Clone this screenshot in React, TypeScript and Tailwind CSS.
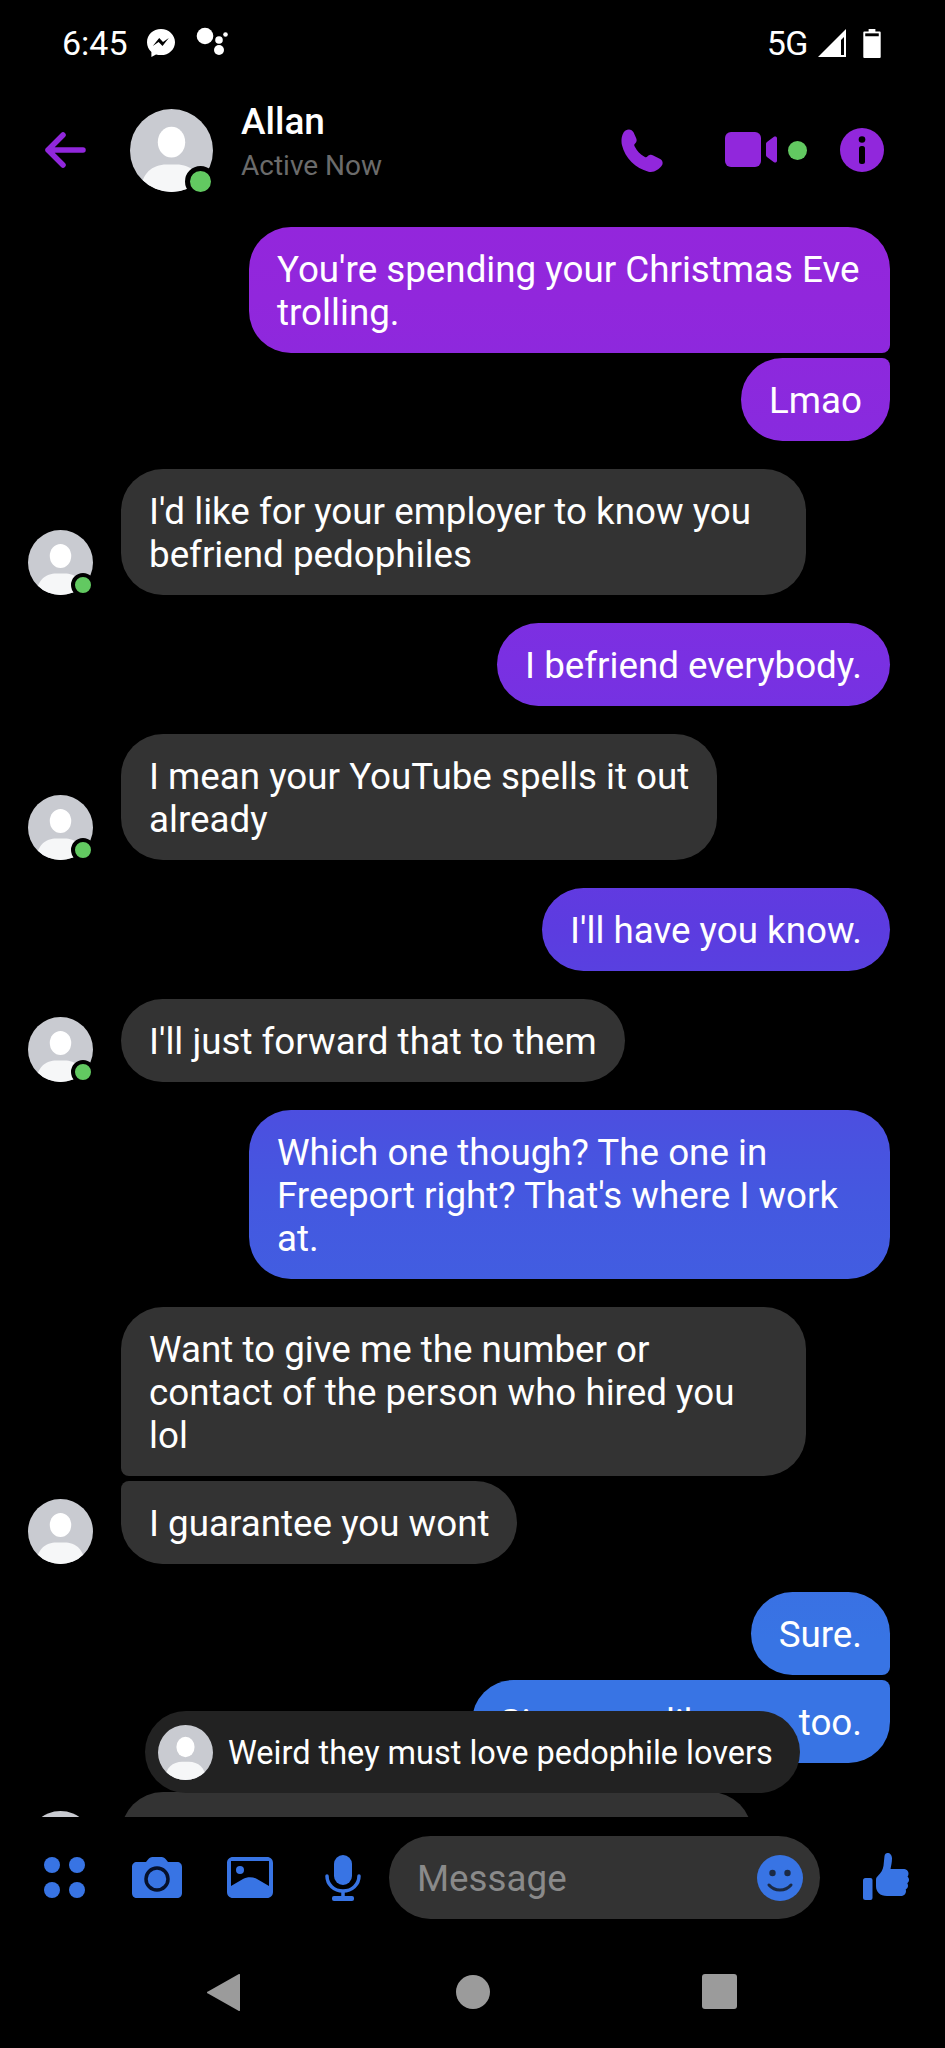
import React from "react";

const Avatar = ({ size }: { size: string }) => (
  <div className={`relative shrink-0 ${size}`}>
    <svg viewBox="0 0 100 100" className="w-full h-full block">
      <defs>
        <clipPath id="av"><circle cx="50" cy="50" r="50" /></clipPath>
      </defs>
      <circle cx="50" cy="50" r="50" fill="#c9cbd1" />
      <g clipPath="url(#av)">
        <ellipse cx="50" cy="40" rx="16.5" ry="18.5" fill="#fff" />
        <path d="M13 100C13 78 27 67 44 67h12c17 0 31 11 31 33Z" fill="#f6f7f8" />
      </g>
    </svg>
  </div>
);

const Online = ({ big }: { big?: boolean }) => (
  <div
    className={
      big
        ? "absolute right-[-3px] bottom-[-5px] w-[31px] h-[31px] rounded-full bg-[#62c961] border-[5px] border-black"
        : "absolute right-[-2px] bottom-[-2px] w-[24px] h-[24px] rounded-full bg-[#62c961] border-[4px] border-black"
    }
  />
);

const SmallAvatar = ({ online }: { online?: boolean }) => (
  <div className="relative shrink-0 w-[65px] h-[65px]">
    <Avatar size="w-[65px] h-[65px]" />
    {online && <Online />}
  </div>
);

const Text = ({ lines }: { lines: string[] }) => (
  <>
    {lines.map((l, i) => (
      <div key={i} className="whitespace-nowrap">
        {l}
      </div>
    ))}
  </>
);

const Mine = ({ lines, cls }: { lines: string[]; cls: string }) => (
  <div className="flex justify-end">
    <div
      className={`bg-fixed bg-[linear-gradient(180deg,#9a24dc_0px,#9127dc_300px,#7a30e2_660px,#5c3ce0_930px,#4458e0_1200px,#3874e4_1640px)] text-white px-[28px] pt-[21px] pb-[19px] text-[36.75px] leading-[43px] ${cls}`}
    >
      <Text lines={lines} />
    </div>
  </div>
);

const Theirs = ({ lines, cls, avatar, online }: { lines?: string[]; cls: string; avatar?: boolean; online?: boolean }) => (
  <div className="flex items-end gap-[28px]">
    {avatar ? <SmallAvatar online={online} /> : <div className="w-[65px] shrink-0" />}
    <div className={`bg-[#333333] text-white px-[28px] pt-[21px] pb-[19px] text-[36.75px] leading-[43px] ${cls}`}>
      {lines && <Text lines={lines} />}
    </div>
  </div>
);

export default function App() {
  return (
    <div className="relative w-[945px] h-[2048px] bg-black overflow-hidden flex flex-col font-['Roboto',sans-serif] text-white">
      {/* Status bar */}
      <div className="h-[86px] shrink-0 flex items-center pl-[62px] pr-[64px]">
        <span className="text-[34px] leading-none">6:45</span>
        <svg viewBox="0 0 30 30" className="w-[30px] h-[30px] ml-[18px]">
          <path d="M15 1C7 1 1 6.800 1 14.200c0 3.900 1.700 7.300 4.400 9.700v5L10 26.400c1.600.5 3.200.7 5 .7 8 0 14-5.800 14-12.900S23 1 15 1Z" fill="#fff" />
          <path d="m6.800 18 6.400-8 3.800 4 5.800-4-6.300 8-3.900-4Z" fill="#000" />
        </svg>
        <svg viewBox="0 0 32 32" className="w-[32px] h-[32px] ml-[20px]">
          <circle cx="9" cy="9" r="8.300" fill="#fff" />
          <circle cx="23" cy="13" r="3.800" fill="#fff" />
          <circle cx="23" cy="23" r="5" fill="#fff" />
          <circle cx="29.500" cy="7.500" r="2.300" fill="#fff" />
        </svg>
        <div className="flex-1" />
        <span className="text-[34px] leading-none tracking-[-0.5px]">5G</span>
        <svg viewBox="0 0 29 29" className="w-[29px] h-[29px] ml-[10px]">
          <path d="M0 28 28 0v28Z" fill="#fff" />
          <path d="M23 11v15h3V8Z" fill="#000" />
        </svg>
        <svg viewBox="0 0 18 30" className="w-[18px] h-[29px] ml-[16px]">
          <path d="M5.500 0h7v2.500H17a1 1 0 0 1 1 1V29a1 1 0 0 1-1 1H1a1 1 0 0 1-1-1V3.500a1 1 0 0 1 1-1h4.500Z" fill="#fff" />
          <rect x="2" y="4.500" width="14" height="3" fill="#000" />
        </svg>
      </div>

      {/* Header */}
      <div className="h-[128px] shrink-0 flex items-center pl-[44px] pr-[61px]">
        <svg viewBox="0 0 42 36" className="w-[42px] h-[36px]">
          <path d="M39 18H4M19 3 4 18l15 15" fill="none" stroke="#9127dc" strokeWidth="5.500" strokeLinecap="round" strokeLinejoin="round" />
        </svg>
        <div className="relative ml-[44px] w-[83px] h-[83px] shrink-0">
          <Avatar size="w-[83px] h-[83px]" />
          <Online big />
        </div>
        <div className="ml-[28px] flex flex-col mt-[-17px]">
          <span className="text-[37px] leading-[46px] font-medium text-white">Allan</span>
          <span className="text-[28px] leading-[36px] mt-[3px] text-[#6b6b6b]">Active Now</span>
        </div>
        <div className="flex-1" />
        <svg viewBox="0 0 44 44" className="w-[44px] h-[44px] mt-[1px]">
          <path d="M4.500 1.500c3-2 6.600-1.200 8 1.800l2.600 5.600c1 2.200.6 3.900-1 5.500-1 1-1.100 1.700-.4 3.100 2.500 4.700 5.300 7.600 9.800 10.200 1.300.8 2.100.7 3.100-.4 1.600-1.600 3.500-2 5.600-.9l6.500 3.300c3.200 1.600 3.900 5 1.600 7.500-2.600 2.900-6.900 6.700-12.800 5.500C14.500 39.500 3.900 28.700 1 16.300-.5 10 1.500 3.500 4.500 1.500Z" fill="#9127dc" />
        </svg>
        <svg viewBox="0 0 54 36" className="w-[54px] h-[36px] ml-[60px]">
          <rect x="0" y="0" width="36" height="35" rx="6" fill="#9127dc" />
          <path d="M41 12.500c0-1 .5-1.700 1.300-2.300l6.700-4.900c1.200-.8 3-.2 3 1.400v22.600c0 1.600-1.800 2.300-3 1.400l-6.700-5c-.8-.6-1.300-1.300-1.300-2.300Z" fill="#9127dc" transform="translate(0 -.5)" />
        </svg>
        <div className="w-[19px] h-[19px] rounded-full bg-[#62c961] ml-[9px]" />
        <svg viewBox="0 0 44 44" className="w-[44px] h-[44px] ml-[33px]">
          <circle cx="22" cy="22" r="22" fill="#9127dc" />
          <circle cx="22" cy="11.500" r="3.300" fill="#000" />
          <rect x="19" y="18" width="6" height="18" rx="2.500" fill="#000" />
        </svg>
      </div>

      {/* Messages */}
      <div className="h-[1603px] shrink-0 overflow-hidden pt-[13px] pl-[28px] pr-[55px] flex flex-col">
        <Mine lines={["You're spending your Christmas Eve", "trolling."]} cls="w-[641px] rounded-[42px] rounded-br-[8px]" />
        <div className="mt-[5px]"><Mine lines={["Lmao"]} cls="rounded-[42px] rounded-tr-[8px]" /></div>
        <div className="mt-[28px]"><Theirs avatar online lines={["I'd like for your employer to know you", "befriend pedophiles"]} cls="w-[685px] rounded-[42px]" /></div>
        <div className="mt-[28px]"><Mine lines={["I befriend everybody."]} cls="rounded-[42px]" /></div>
        <div className="mt-[28px]"><Theirs avatar online lines={["I mean your YouTube spells it out", "already"]} cls="rounded-[42px]" /></div>
        <div className="mt-[28px]"><Mine lines={["I'll have you know."]} cls="rounded-[42px]" /></div>
        <div className="mt-[28px]"><Theirs avatar online lines={["I'll just forward that to them"]} cls="rounded-[42px]" /></div>
        <div className="mt-[28px]"><Mine lines={["Which one though? The one in", "Freeport right? That's where I work", "at."]} cls="w-[641px] rounded-[42px]" /></div>
        <div className="mt-[28px]"><Theirs lines={["Want to give me the number or", "contact of the person who hired you", "lol"]} cls="w-[685px] rounded-[42px] rounded-bl-[8px]" /></div>
        <div className="mt-[5px]"><Theirs avatar lines={["I guarantee you wont"]} cls="rounded-[42px] rounded-tl-[8px]" /></div>
        <div className="mt-[28px]"><Mine lines={["Sure."]} cls="rounded-[42px] rounded-br-[8px]" /></div>
        <div className="mt-[5px]"><Mine lines={["Since you like me, too."]} cls="rounded-[42px] rounded-tr-[8px]" /></div>
        <div className="mt-[29px]"><Theirs avatar cls="w-[631px] h-[84px] rounded-[42px]" /></div>
      </div>

      {/* Floating preview */}
      <div className="absolute left-[145px] top-[1711px] w-[655px] h-[82px] rounded-full bg-[#222222] flex items-center pl-[13px]">
        <Avatar size="w-[55px] h-[55px]" />
        <span className="ml-[15px] mt-[2px] text-[32.5px] leading-none text-white whitespace-nowrap">Weird they must love pedophile lovers</span>
      </div>

      {/* Composer */}
      <div className="h-[121px] shrink-0 flex items-center pl-[44px]">
        <svg viewBox="0 0 41 41" className="w-[41px] h-[41px] text-[#3874e4]" fill="currentColor">
          <circle cx="8" cy="8" r="8" /><circle cx="33" cy="8" r="8" /><circle cx="8" cy="33" r="8" /><circle cx="33" cy="33" r="8" />
        </svg>
        <svg viewBox="0 0 50 41" className="w-[50px] h-[41px] ml-[47px] text-[#3874e4]">
          <path d="M5 5h9l2-2.500C17.200 1 18.500 0 20.500 0h9c2 0 3.300 1 4.500 2.500L36 5h9c3 0 5 2 5 5v26c0 3-2 5-5 5H5c-3 0-5-2-5-5V10c0-3 2-5 5-5Z" fill="currentColor" />
          <circle cx="25" cy="22" r="11" fill="#3874e4" stroke="#06102a" strokeWidth="3.500" />
        </svg>
        <svg viewBox="0 0 46 41" className="w-[46px] h-[41px] ml-[45px]">
          <path fillRule="evenodd" d="M6 0h34c3.500 0 6 2.500 6 6v29c0 3.500-2.500 6-6 6H6c-3.500 0-6-2.500-6-6V6c0-3.500 2.500-6 6-6Zm-2 4v25l12-7c4-2.400 10-2.400 14 0l12 7V4Z" fill="#3874e4" />
          <circle cx="13" cy="13" r="4" fill="#3874e4" />
        </svg>
        <svg viewBox="0 0 36 46" className="w-[36px] h-[46px] ml-[52px] text-[#3874e4]">
          <rect x="9" y="0" width="18" height="30" rx="9" fill="currentColor" />
          <path d="M2 21c0 8.500 7 15 16 15s16-6.500 16-15" fill="none" stroke="currentColor" strokeWidth="3.500" strokeLinecap="round" />
          <path d="M18 36v6" stroke="currentColor" strokeWidth="3.500" />
          <rect x="7" y="41" width="22" height="5" rx="2" fill="currentColor" />
        </svg>
        <div className="ml-[28px] w-[431px] h-[83px] rounded-full bg-[#333333] flex items-center pl-[28px] pr-[17px]">
          <span className="flex-1 mt-[3px] text-[36.75px] leading-none text-[#8a8a8a]">Message</span>
          <svg viewBox="0 0 46 46" className="w-[46px] h-[46px]">
            <circle cx="23" cy="23" r="23" fill="#3874e4" />
            <circle cx="15.500" cy="18" r="3.200" fill="#1b2a45" />
            <circle cx="30.500" cy="18" r="3.200" fill="#1b2a45" />
            <path d="M12 30c3 3.500 6.500 5 11 5s8-1.500 11-5" fill="none" stroke="#1b2a45" strokeWidth="3" strokeLinecap="round" />
          </svg>
        </div>
        <svg viewBox="0 0 46 48" className="w-[46px] h-[48px] ml-[43px] mt-[-1px]">
          <path d="M2.500 25h5a2 2 0 0 1 2 2v18a2 2 0 0 1-2 2h-5a2.500 2.500 0 0 1-2.500-2.500v-17A2.500 2.500 0 0 1 2.500 25Z" fill="#3874e4" />
          <path d="M13 27c0-2 .8-3 2-4.200 3-2.800 5-6 5.500-10L21.500 3c.3-2 1.500-3 3-3 2.500 0 4.500 2 4.500 5.500 0 4-1 7.500-1.500 10.500H40c3.500 0 5.500 2 5.500 4.500 0 1.500-.5 2.500-1 3 .8.800 1.500 2 1.500 3.300 0 1.700-.7 2.700-1.700 3.500.5.700.7 1.500.7 2.500 0 1.800-1 3-2.300 3.700.2.500.3 1 .3 1.500 0 3-2.300 5-5.500 5H24c-7 0-11-4-11-10Z" fill="#3874e4" />
        </svg>
      </div>

      {/* Navigation */}
      <div className="flex-1 relative flex items-start pt-[36px] pl-[207px]">
        <svg viewBox="0 0 33 37" className="w-[33px] h-[37px]">
          <path d="M33 1v35a1 1 0 0 1-1.500.8L1 19.500a1 1 0 0 1 0-2L31.500.2A1 1 0 0 1 33 1Z" fill="#9b9b9b" />
        </svg>
        <div className="w-[34px] h-[34px] rounded-full bg-[#9b9b9b] ml-[216px] mt-[1px]" />
        <div className="w-[35px] h-[35px] rounded-[3px] bg-[#9b9b9b] ml-[212px]" />
      </div>
    </div>
  );
}
